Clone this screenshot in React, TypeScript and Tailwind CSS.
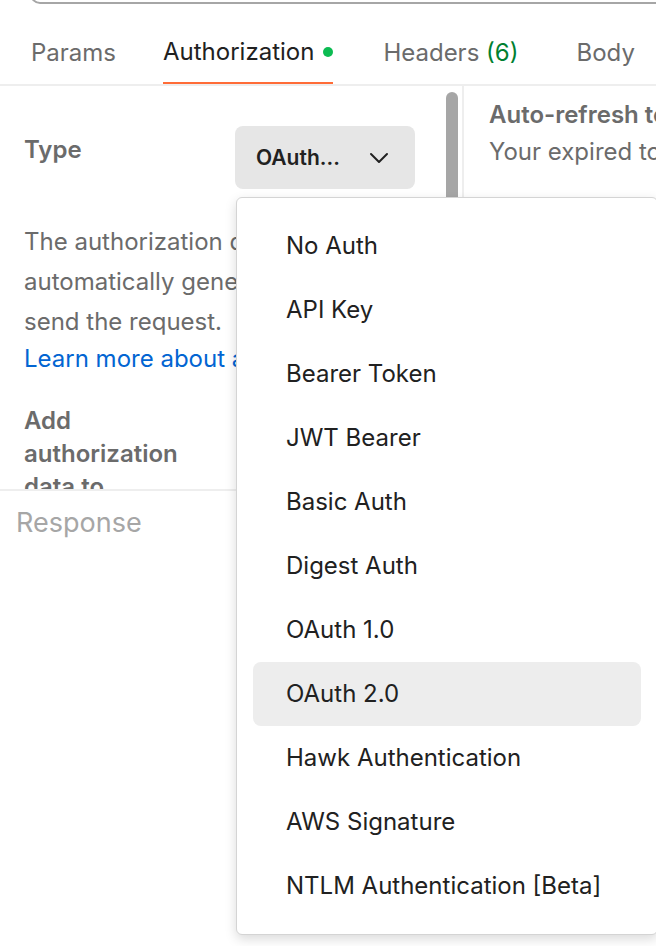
import React from "react";

const items = [
  "No Auth",
  "API Key",
  "Bearer Token",
  "JWT Bearer",
  "Basic Auth",
  "Digest Auth",
  "OAuth 1.0",
  "OAuth 2.0",
  "Hawk Authentication",
  "AWS Signature",
  "NTLM Authentication [Beta]",
];

export default function App() {
  return (
    <div
      className="relative w-[656px] h-[946px] overflow-hidden bg-white text-[#212121]"
      style={{ fontFamily: "Inter, 'Noto Sans', sans-serif" }}
    >
      {/* cropped input at top */}
      <div className="h-[5px] overflow-hidden">
        <div className="ml-[30px] mt-[-41px] h-[45px] w-[700px] rounded-[10px] border-2 border-[#a6a6a6]" />
      </div>

      {/* tabs */}
      <div className="flex h-[81px] items-stretch border-b-2 border-[#eeeeee] pl-[31px] text-[24px]">
        <div className="flex items-center pt-[16px] text-[#6b6b6b]">Params</div>
        <div className="ml-[47px] flex flex-col">
          <div className="flex flex-1 items-center gap-[9px] pt-[16px] text-[#212121]">
            <span>Authorization</span>
            <span className="h-[10px] w-[10px] rounded-full bg-[#0cbb52]" />
          </div>
          <div className="h-[2px] bg-[#ff6c37]" />
        </div>
        <div className="ml-[50px] flex items-center pt-[16px] text-[#6b6b6b]">
          Headers&nbsp;<span className="text-[#007f31]">(6)</span>
        </div>
        <div className="ml-[58px] flex items-center pt-[16px] text-[#6b6b6b]">Body</div>
      </div>

      {/* split area */}
      <div className="flex h-[403px] overflow-hidden">
        <div className="flex w-[464px] shrink-0 border-r-2 border-[#eeeeee]">
          <div className="flex-1 overflow-hidden pl-[24px] pt-[40px]">
            <div className="flex items-start">
              <div className="w-[211px] shrink-0 pt-[7px] text-[24px] font-semibold leading-[33px] text-[#6b6b6b]">
                Type
              </div>
              <div className="flex h-[63px] w-[180px] shrink-0 items-center justify-between rounded-[8px] bg-[#e6e6e6] pl-[21px] pr-[26px]">
                <span className="text-[21px] font-semibold text-[#212121]">OAuth...</span>
                <svg width="20" height="12" viewBox="0 0 20 12" fill="none">
                  <path d="M2 2l8 8 8-8" stroke="#212121" strokeWidth="2" strokeLinecap="round" strokeLinejoin="round" />
                </svg>
              </div>
            </div>
            <div className="mt-[33px] text-[24px] leading-[40px] text-[#6b6b6b]">
              <div className="whitespace-nowrap">The authorization data will be</div>
              <div className="whitespace-nowrap">automatically generated when you</div>
              <div className="whitespace-nowrap">send the request.</div>
            </div>
            <div className="whitespace-nowrap text-[24px] leading-[34px] text-[#0265d2]">
              Learn more about authorization
            </div>
            <div className="mt-[28px] w-[175px] text-[24px] font-semibold leading-[33px] text-[#6b6b6b]">
              Add authorization data to
            </div>
          </div>
          <div className="mr-[4px] mt-[6px] h-[380px] w-[12px] shrink-0 rounded-full bg-[#a6a6a6]" />
        </div>
        <div className="min-w-0 flex-1 overflow-hidden pl-[25px] pt-[11px]">
          <div className="whitespace-nowrap text-[24px] font-semibold leading-[36px] text-[#6b6b6b]">
            Auto-refresh token
          </div>
          <div className="whitespace-nowrap text-[24px] leading-[38px] text-[#6b6b6b]">
            Your expired token will be auto-refreshed
          </div>
        </div>
      </div>

      {/* response */}
      <div className="border-t-2 border-[#eeeeee] pl-[16px] pt-[14px] text-[27px] leading-[36px] text-[#a6a6a6]">
        Response
      </div>

      {/* dropdown */}
      <div className="absolute left-[236px] top-[197px] w-[422px] rounded-[6px] border border-[#d4d4d4] bg-white py-[16px] shadow-[0_4px_12px_rgba(0,0,0,0.15)]">
        {items.map((it) => (
          <div
            key={it}
            className={
              "mx-[16px] flex h-[64px] items-center rounded-[8px] pl-[33px] text-[24px] text-[#212121] " +
              (it === "OAuth 2.0" ? "bg-[#ededed]" : "")
            }
          >
            {it}
          </div>
        ))}
      </div>
    </div>
  );
}
